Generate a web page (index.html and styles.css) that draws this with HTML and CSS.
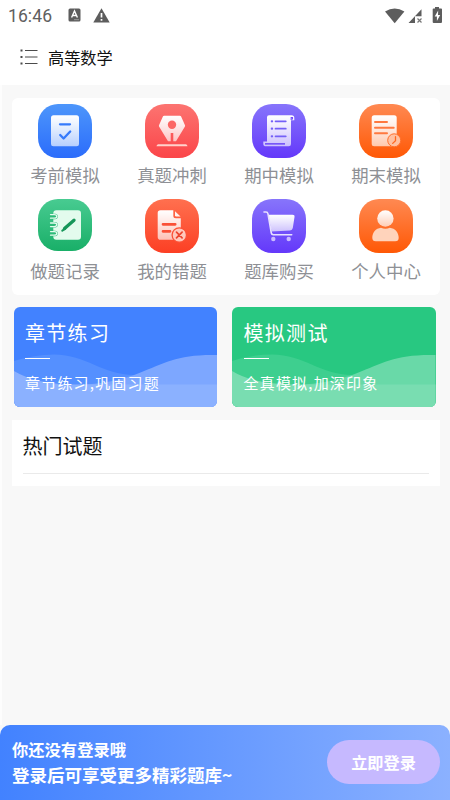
FILE: index.html
```html
<!DOCTYPE html>
<html lang="zh-CN">
<head>
<meta charset="utf-8">
<title>高等数学</title>
<link rel="stylesheet" href="styles.css">
</head>
<body>
<svg class="defs" width="0" height="0" aria-hidden="true">
  <defs>
    <linearGradient id="blue" x2="0" y2="1"><stop stop-color="#4d96fb"/><stop offset="1" stop-color="#2b6cfb"/></linearGradient>
    <linearGradient id="pink" x2="0" y2="1"><stop stop-color="#fc7471"/><stop offset="1" stop-color="#fb4549"/></linearGradient>
    <linearGradient id="violet" x2="0" y2="1"><stop stop-color="#8775fb"/><stop offset="1" stop-color="#6438fa"/></linearGradient>
    <linearGradient id="orange" x2="0" y2="1"><stop stop-color="#ff8952"/><stop offset="1" stop-color="#ff5805"/></linearGradient>
    <linearGradient id="green" x2="0" y2="1"><stop stop-color="#48cb91"/><stop offset="1" stop-color="#19af68"/></linearGradient>
    <linearGradient id="red" x2="0" y2="1"><stop stop-color="#ff704f"/><stop offset="1" stop-color="#fc3f24"/></linearGradient>
    <linearGradient id="paper" x2="0" y2="1"><stop stop-color="#fff"/><stop offset="1" stop-color="#fff" stop-opacity=".65"/></linearGradient>
  </defs>
</svg>
<div class="screen">
  <header class="status">
    <span class="time">16:46</span>
    <svg class="s-a" width="13" height="14" viewBox="0 0 13 14"><rect x=".5" y=".5" width="12" height="13" rx="1.5" fill="#5d5d5d"/><path d="M3.6 9.5 6.5 3l2.9 6.5M4.7 7.5h3.6" fill="none" stroke="#fff" stroke-width="1.4"/><path d="M6 11.7h5" stroke="#aaa" stroke-width=".8"/></svg>
    <svg class="s-warn" width="17" height="15" viewBox="0 0 17 15"><path d="M8.5.3 16.7 14.5H.3z" fill="#5d5d5d"/><path d="M8.5 5v4.6M8.5 11v1.8" stroke="#fff" stroke-width="1.7"/></svg>
    <svg class="s-right" width="58" height="18" viewBox="0 0 58 18"><path d="M0 4.6Q9.700-1.800 19.400 4.600L9.700 16.300z" fill="#5d5d5d"/><path d="M36.500 2.300v7H30V16h-6.500z" fill="#5d5d5d"/><path d="m32.500 11.500 4 4m0-4-4 4" stroke="#777" stroke-width="1.2"/><path d="M50 1.500V0h4v1.500h2.200q.8 0 .8.8V15q0 1-1 1h-7.300q-1 0-1-1V2.300q0-.8.8-.8z" fill="#5d5d5d"/><path d="m53.200 3.500-3.500 6h2.200V14l3.300-6H53z" fill="#fff"/></svg>
  </header>
  <div class="titlebar">
    <svg width="18" height="16" viewBox="0 0 18 16"><path d="M5 1.500h12.500M5 8h12.500M5 14.500h12.500" stroke="#4b4b4b" stroke-width="1.2"/><path d="M.5 1.500h2M.5 8h2M.5 14.500h2" stroke="#4b4b4b" stroke-width="1.8"/></svg>
    <h1>高等数学</h1>
  </div>
  <main class="content">
    <nav class="menu">
      <a class="item"><svg viewBox="0 0 54 54"><rect width="54" height="54" rx="20" fill="url(#blue)"/><rect x="13" y="11.3" width="28" height="31" rx="2.5" fill="url(#paper)"/><path d="M22 20.3h10M22.2 31l3.4 3.5 6.6-7" fill="none" stroke="#357afb" stroke-width="2.3" stroke-linecap="round" stroke-linejoin="round"/></svg><span>考前模拟</span></a>
      <a class="item"><svg viewBox="0 0 54 54"><rect width="54" height="54" rx="20" fill="url(#pink)"/><path d="M19.2 11.7h15.6q1 0 1.3.9l3.900 8.600q.3.8-.2 1.600L31 37.300h-2.700V29h-2.600v8.300H23l-8.800-14.500q-.5-.8-.2-1.600l3.900-8.600q.3-.9 1.300-.9z" fill="url(#paper)"/><circle cx="27" cy="20.7" r="4.2" fill="#fc6664"/><path d="M13 40.300h28q1.300.3 1.500 2h-31q.2-1.700 1.500-2z" fill="#ffd2cc"/></svg><span>真题冲刺</span></a>
      <a class="item"><svg viewBox="0 0 54 54"><rect width="54" height="54" rx="20" fill="url(#violet)"/><path d="M17 11.300h22.500q2.800 0 2.800 2.500v2.500H39V40q0 2.300-2.300 2.300H14q-2.700 0-2.700-2.600v-2.200H15V13.300q0-2 2-2z" fill="url(#paper)"/><path d="M39.200 16v-2.500h1.300v2" fill="none" stroke="#724dfb" stroke-width="1.100"/><path d="M13 39h20v1.700H13z" fill="#7756f8"/><path d="M23.500 17.300h10.300M23.500 24.700h10.300M23.500 32.300h10.300" stroke="#7460f7" stroke-width="1.700" stroke-linecap="round"/><path d="M19.800 17.300h.3M19.800 24.700h.3M19.800 32.300h.3" stroke="#7460f7" stroke-width="2.200" stroke-linecap="round"/></svg><span>期中模拟</span></a>
      <a class="item"><svg viewBox="0 0 54 54"><rect width="54" height="54" rx="20" fill="url(#orange)"/><rect x="12.7" y="11.3" width="25" height="31" rx="2.5" fill="url(#paper)"/><path d="M16 18h12M16 23.700h18.700M16 29.300h12" stroke="#ff7940" stroke-width="2" stroke-linecap="round"/><circle cx="35.2" cy="36.3" r="6.5" fill="#ffc1a2" stroke="#ff6f2b" stroke-width="1"/><path d="M36.500 32.700v4l-2.800 2.700" fill="none" stroke="#ff6821" stroke-width="1.300" stroke-linecap="round"/></svg><span>期末模拟</span></a>
      <a class="item"><svg viewBox="0 0 54 54"><rect width="54" height="52" rx="20" fill="url(#green)"/><rect x="15.3" y="11.3" width="27.7" height="29.4" rx="3" fill="#e3fbed"/><g fill="none"><path d="M14.500 17.400h2.500M14.500 25.800h2.500M14.500 34.400h2.500" stroke="#2dba78" stroke-width="5.500" stroke-linecap="round"/><path d="M12.500 15.600h3.700q2.600 0 2.600 1.800t-2.600 1.800h-3.700M12.500 24h3.700q2.600 0 2.600 1.800t-2.600 1.800h-3.700M12.500 32.600h3.700q2.600 0 2.600 1.800t-2.600 1.800h-3.700" stroke="#e3fbed" stroke-width="1.300" stroke-linecap="round"/><path d="m26.500 29.500 9.500-8.300" stroke="#169659" stroke-width="3.300" stroke-linecap="round"/><path d="m24.300 31.700 3-2" stroke="#169659" stroke-width="2" stroke-linecap="round"/></g></svg><span>做题记录</span></a>
      <a class="item"><svg viewBox="0 0 54 54"><rect width="54" height="54" rx="20" fill="url(#red)"/><path d="M15.500 11.300h12.800v5.500q0 2.500 2.500 2.500h5v18.400q0 3-3 3H15.500q-2.800 0-2.800-2.800V14.100q0-2.800 2.800-2.800z" fill="url(#paper)"/><path d="M30 12.200v4.100q0 1.300 1.300 1.300h4.200z" fill="#fff1ed"/><path d="M18 25.300h12.200M18 32.300h7" stroke="#fa5037" stroke-width="2.700" stroke-linecap="round"/><circle cx="34.3" cy="36" r="7.2" fill="#ffc8bc" stroke="#fc5036" stroke-width="1.300"/><path d="m31.500 33.200 5.600 5.600m0-5.600-5.600 5.600" stroke="#ed442d" stroke-width="1.700" stroke-linecap="round"/></svg><span>我的错题</span></a>
      <a class="item"><svg viewBox="0 0 54 54"><rect width="54" height="54" rx="20" fill="url(#violet)"/><path d="M16.200 15.800h24.300q2.400 0 2 2.300l-1.700 10.800q-.4 2.400-2.800 2.500l-18.400 1z" fill="url(#paper)"/><path d="M12 13h2q1.600 0 2 1.800L19.300 34q.3 1.700 2 1.700h18.400" fill="none" stroke="#e7e0ff" stroke-width="1.600" stroke-linecap="round"/><circle cx="21.3" cy="40" r="2.2" fill="#cabaff"/><circle cx="36.7" cy="40" r="2.2" fill="#cabaff"/></svg><span>题库购买</span></a>
      <a class="item"><svg viewBox="0 0 54 54"><rect width="54" height="54" rx="20" fill="url(#orange)"/><circle cx="26.4" cy="19.5" r="8.2" fill="url(#paper)"/><path d="M22 28.700q4.400 2.200 8.800 0c5.400.6 8.900 5 8.900 10q0 3.500-3.500 3.500H16.800q-3.500 0-3.500-3.500c0-5 3.400-9.400 8.700-10z" fill="#ffd3bb"/></svg><span>个人中心</span></a>
    </nav>
    <section class="banners">
      <article class="banner banner-blue">
        <svg class="wave" viewBox="0 0 203 100" preserveAspectRatio="none"><path d="M0 54Q20 47.500 40 47.500C72 47.500 88 68 120 68L150 77.500V100H0z" fill="#5590ff"/><path d="M60 78C90 77.500 110 72 125 66C150 56 164 47 203 48V100H60z" fill="#7da7ff"/><path d="M0 64Q22 77.500 62 77.500H203V100H0z" fill="#8bb1ff"/></svg>
        <h2>章节练习</h2><i></i><p>章节练习,巩固习题</p>
      </article>
      <article class="banner banner-green">
        <svg class="wave" viewBox="0 0 203 100" preserveAspectRatio="none"><path d="M0 54Q20 47.500 40 47.500C72 47.500 88 68 120 68L150 77.500V100H0z" fill="#3ecf8f"/><path d="M60 78C90 77.500 110 72 125 66C150 56 164 47 203 48V100H60z" fill="#69d9a8"/><path d="M0 64Q22 77.500 62 77.500H203V100H0z" fill="#79ddb1"/></svg>
        <h2>模拟测试</h2><i></i><p>全真模拟,加深印象</p>
      </article>
    </section>
    <section class="hot"><h2>热门试题</h2></section>
  </main>
  <footer class="login">
    <div class="msg"><p class="l1">你还没有登录哦</p><p class="l2">登录后可享受更多精彩题库~</p></div>
    <button>立即登录</button>
  </footer>
</div>
</body>
</html>
```
FILE: styles.css
```css
* { box-sizing: border-box; }
body, h1, h2, p { margin: 0; font-weight: 400; }
body { font-family: "Noto Sans CJK SC", sans-serif; }
.defs { position: absolute; }
.screen { width: 450px; height: 800px; display: flex; flex-direction: column; background: #f8f8f8; overflow: hidden; }
.status { height: 32px; flex: none; display: flex; background: #fff; padding-left: 8px; color: #606060; }
.time { font: 17.500px/32px Roboto, sans-serif; width: 60px; letter-spacing: .1px; }
.s-a { margin-top: 8px; }
.s-warn { margin: 8px 0 0 12px; }
.s-right { margin: 7px 7px 0 auto; }
.titlebar { height: 53px; flex: none; background: #fff; display: flex; align-items: center; padding: 0 0 3px 20px; gap: 10px; }
.titlebar h1 { font-size: 16.200px; line-height: 24px; color: #111; }
.content { flex: 1; border-left: 2px solid #fdfdfd; padding: 12.500px 10px 0 9.500px; }
.menu { height: 197px; background: #fff; border-radius: 6px; display: grid; grid-template-columns: repeat(4, 107px); grid-auto-rows: 95.500px; padding-top: 6px; }
.item { display: flex; flex-direction: column; align-items: center; color: #8e9095; }
.item svg { width: 54px; height: 54px; display: block; }
.item span { font-size: 17.400px; line-height: 26px; margin-top: 4.500px; }
.banners { display: flex; gap: 15px; margin: 12.500px 0 0 2px; }
.banner { position: relative; width: 203.500px; height: 100px; border-radius: 6px; overflow: hidden; padding: 11px 0 0 11.500px; color: #fff; }
.banner-blue { background: #4282ff; }
.banner-green { background: #28c881; }
.wave { position: absolute; left: 0; top: 0; width: 100%; height: 100%; }
.banner h2, .banner i, .banner p { position: relative; }
.banner h2 { font-size: 20px; line-height: 30px; letter-spacing: 1.300px; }
.banner i { display: block; width: 25px; height: 1.500px; background: #fff; margin-top: 9.500px; }
.banner p { font-size: 15px; line-height: 22px; letter-spacing: 1.200px; margin-top: 13px; }
.hot { margin-top: 12.500px; height: 66px; background: #fff; padding: 11.500px 11px 0; }
.hot h2 { height: 43px; font-size: 20px; line-height: 30px; border-bottom: 1.500px solid #eaeaea; color: #111; }
.login { flex: none; height: 75px; border-radius: 10px 10px 0 0; background: linear-gradient(90deg, #4282ff, #8bb1ff); display: flex; justify-content: space-between; padding: 12px 10px 0 12px; color: #fff; }
.login p { font-weight: 700; white-space: nowrap; }
.l1 { font-size: 16.300px; line-height: 25px; }
.l2 { font-size: 17.500px; line-height: 26px; }
.login button { width: 113px; height: 44px; margin-top: 3px; border: 0; border-radius: 22px; padding: 0; background: #c6b9ff; color: #fff; font: 700 16.200px "Noto Sans CJK SC", sans-serif; }
```
